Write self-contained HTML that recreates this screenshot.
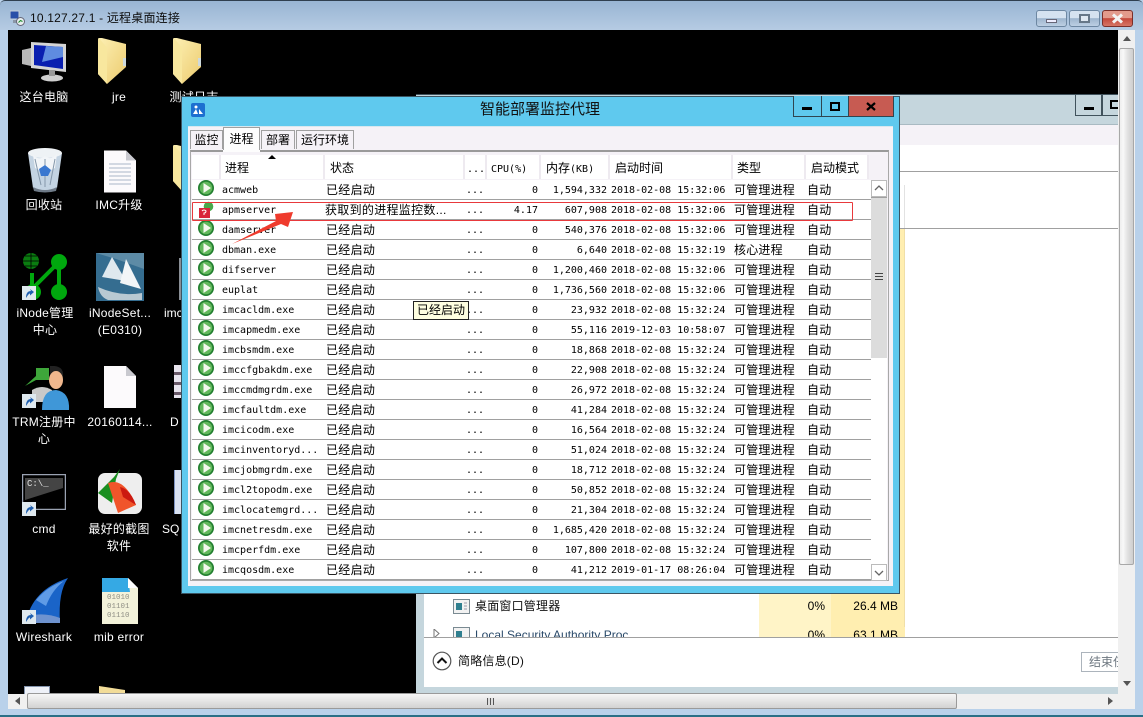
<!DOCTYPE html>
<html><head><meta charset="utf-8"><style>
html,body{margin:0;padding:0;width:1143px;height:717px;overflow:hidden;background:#b9d1ea}
*{box-sizing:border-box}
body{position:relative;font-family:"Liberation Sans","Noto Sans CJK SC",sans-serif;font-size:12px;color:#000}
.a{position:absolute}
.l{position:absolute;color:#fff;font-size:12px;line-height:17px;text-align:center;white-space:nowrap;letter-spacing:.25px;transform:translate(-50%,1px)}
svg{position:absolute;overflow:hidden}
.r{position:absolute;left:192px;width:679px;height:20px;border-bottom:1px solid #a0a0a0;background:#fff}
.r span{position:absolute;top:0;line-height:21px;white-space:nowrap}
.r span.n,.r span.d,.r span.c,.r span.m,.r span.t{font:10px/22px "DejaVu Sans Mono","Liberation Mono",monospace}
.n{left:30px}
.s{left:134px;letter-spacing:.3px}
.d{left:274px}
.c{right:333px}
.m{right:264px}
.t{left:419px}
.y{left:542px;letter-spacing:.2px}
.o{left:615px;letter-spacing:.2px}
.r svg{left:5px;top:-1px}
.h{position:absolute;top:155px;height:24px;background:#fff;border-right:2px solid #eeeaf0;line-height:26px;padding-left:4px;font-size:12px;white-space:nowrap}
.h i{font:10px "DejaVu Sans Mono","Liberation Mono",monospace}
.tab{position:absolute;top:130px;height:19px;background:#f5f2f7;border:1px solid #a0a0a0;border-bottom:none;line-height:19px;text-align:center;font-size:12px}
</style></head><body>
<svg width="0" height="0"><defs>
<linearGradient id="fg" x1="0" y1="0" x2="1" y2="1"><stop offset="0" stop-color="#fdf0b4"/><stop offset="1" stop-color="#eccb6e"/></linearGradient>
<symbol id="p" viewBox="0 0 18 18"><circle cx="9" cy="9" r="8" fill="#237f30"/><circle cx="9" cy="9" r="6.300" fill="#62b85c"/><path d="M6.500 4L14 9L6.500 14Z" fill="#f4f8ee"/></symbol>
<symbol id="f" viewBox="0 0 32 46"><path d="M1 0Q0 0 0 2V36L9 46L28 29V6L4 0Z" fill="url(#fg)"/><path d="M1 0L9 10V46L0 36V2Z" fill="#f8e79e"/><path d="M25 20h3v8h-3z" fill="#cdd9dd"/></symbol>
<symbol id="k" viewBox="0 0 14 14"><rect width="14" height="14" fill="#dfe9ef"/><path d="M4 12C4 7 6 5 9 5L8 3L12 6L8 9.500V7.500C7 7.500 6 9 4 12Z" fill="#1f5fb0"/></symbol>
<symbol id="d" viewBox="0 0 32 42"><path d="M0 0H22L32 10V42H0Z" fill="#fcfafc"/><path d="M22 0L32 10H22Z" fill="#c9c9cf"/></symbol>
</defs></svg>

<!-- outer title -->
<div class="a" style="left:0;top:0;width:1143px;height:30px;background:linear-gradient(#98b5d3,#b5cbe3);border-top:1px solid #2f3f4f;border-radius:5px 5px 0 0"></div>
<svg style="left:10px;top:10px" width="15" height="16" viewBox="0 0 15 16"><rect x="0" y="1" width="9" height="8" fill="#2a4fa8" stroke="#c8d0da"/><rect x="3" y="10" width="5" height="3" fill="#8a96a6"/><circle cx="10.500" cy="11.500" r="4" fill="#e8eef0" stroke="#667"/><path d="M8.500 12.500l2-2 2 1" stroke="#1a8a2a" fill="none"/></svg>
<div class="a" style="left:30px;top:9px;font-size:12px;line-height:18px;letter-spacing:.2px;color:#0d0d0d;white-space:nowrap">10.127.27.1 - 远程桌面连接</div>
<div class="a" style="left:1036px;top:10px;width:31px;height:17px;border:1px solid #6d87a2;border-radius:3px;background:linear-gradient(#d5e2f0 45%,#9db5ce 50%,#bccfe3)"></div>
<div class="a" style="left:1046px;top:19px;width:11px;height:4px;background:#eef;border:1px solid #667"></div>
<div class="a" style="left:1069px;top:10px;width:31px;height:17px;border:1px solid #6d87a2;border-radius:3px;background:linear-gradient(#d5e2f0 45%,#9db5ce 50%,#bccfe3)"></div>
<div class="a" style="left:1079px;top:14px;width:11px;height:9px;background:#dfe8f2;border:2px solid #667788"></div>
<div class="a" style="left:1102px;top:10px;width:31px;height:17px;border:1px solid #7a2f2a;border-radius:3px;background:linear-gradient(#e39a8c 45%,#c4483b 50%,#d67565)"></div>
<svg style="left:1111px;top:13px" width="13" height="11" viewBox="0 0 13 11"><path d="M2 1.500L11 9.500M11 1.500L2 9.500" stroke="#f3f3f3" stroke-width="3"/></svg>

<!-- black desktop -->
<div class="a" style="left:8px;top:30px;width:1110px;height:664px;background:#000;overflow:hidden"></div>

<!-- desktop icons -->
<svg style="left:22px;top:40px" width="46" height="44" viewBox="0 0 46 44"><path d="M0 10L9 8V26L0 24Z" fill="#b9b9b9"/><path d="M9 2L44 4V32L9 28Z" fill="#d5d5d5"/><path d="M12 5L41 7V29L12 25Z" fill="#0a1fb0"/><path d="M24 6L41 7V17L20 22Z" fill="#5f8ce0"/><ellipse cx="30" cy="38" rx="11" ry="3.500" fill="#cfcfcf"/><rect x="27" y="30" width="6" height="6" fill="#999"/></svg>
<div class="l" style="left:44px;top:88px">这台电脑</div>
<svg style="left:98px;top:38px" width="32" height="46"><use href="#f"/></svg>
<div class="l" style="left:119px;top:88px">jre</div>
<svg style="left:173px;top:38px" width="32" height="46"><use href="#f"/></svg>
<div class="l" style="left:194px;top:88px">测试日志</div>

<svg style="left:27px;top:147px" width="36" height="46" viewBox="0 0 36 46"><path d="M1 6L6 41Q18 46 30 41L35 6Z" fill="#c3d3e2"/><ellipse cx="18" cy="6" rx="17" ry="5" fill="#eef2f5"/><path d="M6 8q6 6 12 1q6 5 12-2l-2 14q-10 6-20 0z" fill="#f2f5f8"/><path d="M8 12L14 38M18 12V40M28 12L23 38" stroke="#8497aa"/><path d="M12 22l6-4 6 5-3 6h-7z" fill="#3a78d0"/><path d="M6 40Q18 46 30 40L29 44Q18 47 7 44Z" fill="#6f7b88"/></svg>
<div class="l" style="left:44px;top:196px">回收站</div>
<svg style="left:104px;top:150px" width="32" height="43"><use href="#d"/><path d="M5 14H27M5 18H27M5 22H27M5 26H27M5 30H27M5 34H27" stroke="#aab6c8"/></svg>
<div class="l" style="left:119px;top:196px">IMC升级</div>
<svg style="left:173px;top:145px" width="32" height="46"><use href="#f"/></svg>

<svg style="left:22px;top:253px" width="48" height="48" viewBox="0 0 48 48"><circle cx="9" cy="8" r="8" fill="#0a7d10"/><path d="M1 8H17M9 0V16M3 3H15M3 13H15" stroke="#000" stroke-width=".8"/><path d="M10 36L37 9M37 9V39M10 20V38" stroke="#00a80e" stroke-width="4" fill="none"/><circle cx="37" cy="9" r="8" fill="#00a80e"/><circle cx="37" cy="39" r="8" fill="#00a80e"/><circle cx="11" cy="39" r="8" fill="#00a80e"/></svg>
<svg style="left:22px;top:286px" width="14" height="14"><use href="#k"/></svg>
<div class="l" style="left:45px;top:304px">iNode管理<br>中心</div>
<svg style="left:96px;top:253px" width="48" height="48" viewBox="0 0 48 48"><rect width="48" height="48" fill="#356d90"/><path d="M0 0H48V16L20 6Z" fill="#5d8ba6"/><path d="M16 4L30 28L6 24Z" fill="#dfe8ee"/><path d="M30 6L45 36L24 30Z" fill="#f2f5f7"/><path d="M2 34Q24 44 46 40V47H12Q4 44 2 34Z" fill="#b9c9d2"/></svg>
<div class="l" style="left:120px;top:304px">iNodeSet...<br>(E0310)</div>
<div class="a" style="left:179px;top:258px;width:2px;height:42px;background:#8a8f96"></div>
<div class="a" style="left:164px;top:305px;width:17px;height:17px;overflow:hidden;color:#fff;line-height:17px">imc</div>

<svg style="left:22px;top:366px" width="48" height="44" viewBox="0 0 48 44"><path d="M3 20L14 10V2L27 2V14H14Z" fill="#3ea63a"/><path d="M10 24Q20 18 30 24V36H10Z" fill="#c9c9c9"/><path d="M28 0Q42 -1 41 10V14H28Z" fill="#222"/><ellipse cx="34" cy="14" rx="7" ry="9" fill="#f0b78d"/><path d="M20 44Q20 24 34 24Q48 26 47 44Z" fill="#3f97d8"/></svg>
<svg style="left:22px;top:394px" width="14" height="14"><use href="#k"/></svg>
<div class="l" style="left:44px;top:413px">TRM注册中<br>心</div>
<svg style="left:104px;top:366px" width="32" height="42"><use href="#d"/></svg>
<div class="l" style="left:120px;top:413px">20160114...</div>
<div class="a" style="left:174px;top:365px;width:7px;height:33px;background:repeating-linear-gradient(#e8e4ee 0 7px,#6a5a6a 7px 10px)"></div>
<div class="a" style="left:170px;top:414px;width:11px;height:17px;overflow:hidden;color:#fff;line-height:17px">D</div>

<svg style="left:22px;top:474px" width="44" height="36" viewBox="0 0 44 36"><rect x=".5" y=".5" width="43" height="35" fill="#000" stroke="#9aa2b2" stroke-width="1.500"/><path d="M3 4H41V14L3 26Z" fill="#444"/></svg>
<div class="a" style="left:27px;top:478px;font:9px/12px 'Liberation Mono',monospace;color:#e0e0e0">C:\_</div>
<svg style="left:22px;top:502px" width="14" height="14"><use href="#k"/></svg>
<div class="l" style="left:44px;top:520px">cmd</div>
<svg style="left:98px;top:469px" width="46" height="46" viewBox="0 0 46 46"><rect y="4" width="44" height="41" rx="7" fill="#eee"/><path d="M0 24L16 8L22 0L18 10L14 34Z" fill="#1a8f20"/><path d="M10 14Q26 8 38 36L20 44Z" fill="#f0552a"/><path d="M22 18Q32 20 38 36L25 28Z" fill="#cc1a10"/></svg>
<div class="l" style="left:119px;top:520px">最好的截图<br>软件</div>
<div class="a" style="left:174px;top:470px;width:7px;height:44px;background:#d9e2f2;border-left:1px solid #7d93c2"></div>
<div class="a" style="left:162px;top:521px;width:19px;height:17px;overflow:hidden;color:#fff;line-height:17px">SQ</div>

<svg style="left:24px;top:578px" width="46" height="46" viewBox="0 0 46 46"><path d="M2 44Q8 12 44 0Q34 14 36 44Z" fill="#1a64c8"/><path d="M12 22Q24 8 40 3Q28 12 22 28Z" fill="#5f9be6"/><path d="M4 38Q20 34 36 40V45H2Z" fill="#6f93cf"/></svg>
<svg style="left:22px;top:610px" width="14" height="14"><use href="#k"/></svg>
<div class="l" style="left:44px;top:628px">Wireshark</div>
<svg style="left:102px;top:578px" width="36" height="46" viewBox="0 0 36 46"><path d="M0 0H26L36 10V46H0Z" fill="#f3f2da"/><path d="M0 0H26L28 14H0Z" fill="#35a9e4"/><path d="M26 0L36 10H26Z" fill="#fff"/></svg>
<div class="a" style="left:107px;top:594px;width:28px;font:7.500px/9px 'Liberation Mono',monospace;color:#8f8f85">01010<br>01101<br>01110</div>
<div class="l" style="left:119px;top:628px">mib error</div>
<div class="a" style="left:24px;top:686px;width:26px;height:8px;background:#eef1f8;border:1px solid #8494ad;border-bottom:none"></div>
<div class="a" style="left:99px;top:686px;width:26px;height:8px;background:#f2dc98;clip-path:polygon(0 0,100% 50%,100% 100%,0 100%)"></div>

<!-- behind window -->
<div class="a" style="left:416px;top:94px;width:702px;height:600px;background:#c5d6dd;border-top:1px solid #40525c;overflow:hidden">
 <div class="a" style="left:8px;top:29px;width:694px;height:563px;background:#fff;border-top:1px solid #a9bac2"></div>
 <div class="a" style="left:8px;top:30px;width:694px;height:20px;background:#f5f2f7"></div>
 <div class="a" style="left:8px;top:76px;width:694px;height:1px;background:#a0a0a0"></div>
 <div class="a" style="left:343px;top:133px;width:72px;height:410px;background:#fff4c7"></div>
 <div class="a" style="left:415px;top:133px;width:74px;height:410px;background:#ffeeb0;border-right:1px solid #f0dfa8"></div>
 <div class="a" style="left:8px;top:133px;width:694px;height:1px;background:#a0a0a0"></div>
 <div class="a" style="left:488px;top:90px;width:1px;height:43px;background:#e2e2e2"></div>
 <div class="a" style="left:659px;top:0;width:27px;height:21px;border:1px solid #40525c;border-top:none"></div>
 <div class="a" style="left:668px;top:12px;width:10px;height:3px;background:#000"></div>
 <div class="a" style="left:686px;top:0;width:16px;height:21px;border-left:1px solid #40525c;border-bottom:1px solid #40525c"></div>
 <div class="a" style="left:694px;top:5px;width:10px;height:9px;border:2px solid #000"></div>
 <svg style="left:37px;top:504px" width="17" height="15" viewBox="0 0 17 15"><rect x=".5" y=".5" width="16" height="14" fill="#f2f2f2" stroke="#7a8a92"/><rect x="3" y="4" width="6" height="7" fill="#2f7f8f"/><path d="M11 4h3M11 7h3M11 10h3" stroke="#99a"/></svg>
 <div class="a" style="left:59px;top:503px;line-height:17px;white-space:nowrap;color:#111;letter-spacing:.2px">桌面窗口管理器</div>
 <div class="a" style="left:343px;top:503px;width:66px;text-align:right;line-height:17px">0%</div>
 <div class="a" style="left:415px;top:503px;width:67px;text-align:right;line-height:17px">26.4 MB</div>
 <div class="a" style="left:8px;top:532px;width:694px;height:11px;overflow:hidden">
  <svg style="left:9px;top:2px" width="8" height="10" viewBox="0 0 8 10"><path d="M1 0L6 4.500L1 9Z" fill="#fff" stroke="#777"/></svg>
  <svg style="left:29px;top:0" width="17" height="15" viewBox="0 0 17 15"><rect x=".5" y=".5" width="16" height="14" fill="#f2f2f2" stroke="#7a8a92"/><rect x="3" y="4" width="6" height="7" fill="#2f7f8f"/></svg>
  <div class="a" style="left:51px;top:0;line-height:17px;white-space:nowrap;color:#2a4a6a">Local Security Authority Proc</div>
  <div class="a" style="left:335px;top:0;width:72px;height:11px;background:#fff4c7;text-align:right;padding-right:6px;line-height:17px">0%</div>
  <div class="a" style="left:407px;top:0;width:74px;height:11px;background:#ffeeb0;text-align:right;padding-right:7px;line-height:17px">63.1 MB</div>
 </div>
 <div class="a" style="left:8px;top:542px;width:694px;height:1px;background:#a0a0a0"></div>
 <svg style="left:16px;top:556px" width="20" height="20" viewBox="0 0 20 20"><circle cx="10" cy="10" r="8.800" fill="#fff" stroke="#555" stroke-width="1.200"/><path d="M5.500 12L10 7.500L14.500 12" fill="none" stroke="#111" stroke-width="2"/></svg>
 <div class="a" style="left:42px;top:557px;line-height:18px;white-space:nowrap;color:#111;letter-spacing:.2px">简略信息(D)</div>
 <div class="a" style="left:665px;top:557px;width:40px;height:20px;border:1px solid #acb4bc;line-height:18px;padding-left:7px;color:#6d7780;white-space:nowrap;overflow:hidden">结束任务</div>
</div>

<!-- right scrollbar -->
<div class="a" style="left:1118px;top:30px;width:17px;height:664px;background:#f0f0f0"></div>
<div class="a" style="left:1119px;top:48px;width:15px;height:517px;background:linear-gradient(90deg,#eeeeee,#f8f8f8 25%,#e0e0e0 60%,#cfcfcf);border:1px solid #a8a8a8;border-radius:2px"></div>
<svg style="left:1122px;top:35px" width="10" height="8"><path d="M1 6L5 1L9 6Z" fill="#555"/></svg>
<svg style="left:1122px;top:680px" width="10" height="8"><path d="M1 1L5 6L9 1Z" fill="#555"/></svg>
<!-- bottom scrollbar -->
<div class="a" style="left:8px;top:694px;width:1127px;height:15px;background:#f0f0f0"></div>
<div class="a" style="left:27px;top:693px;width:930px;height:16px;background:linear-gradient(#f6f6f6,#e6e6e6 45%,#d2d2d2);border:1px solid #9a9a9a;border-radius:2px"></div>
<div class="a" style="left:487px;top:698px;width:7px;height:7px;background:repeating-linear-gradient(90deg,#555 0 1px,#ddd 1px 3px)"></div>
<svg style="left:14px;top:696px" width="8" height="10"><path d="M6 1L1 5L6 9Z" fill="#555"/></svg>
<svg style="left:1106px;top:696px" width="8" height="10"><path d="M2 1L7 5L2 9Z" fill="#555"/></svg>
<div class="a" style="left:0;top:709px;width:1143px;height:8px;background:#b9d1ea;border-bottom:2px solid #2a6f86"></div>

<!-- dialog -->
<div class="a" style="left:181px;top:96px;width:719px;height:498px;background:#5fc9ee;border:1px solid #3b5563"></div>
<svg style="left:191px;top:103px" width="14" height="14" viewBox="0 0 14 14"><rect width="14" height="14" rx="2" fill="#1d6fd0"/><circle cx="5" cy="4" r="1.500" fill="#fff"/><path d="M2 11L5 6L7 11ZM8 11V6L12 11Z" fill="#fff"/></svg>
<div class="a" style="left:180px;top:100px;width:720px;text-align:center;font-size:15px;line-height:20px;color:#111">智能部署监控代理</div>
<div class="a" style="left:793px;top:96px;width:101px;height:21px;border:1px solid #2f4550;border-top:none;background:#5fc9ee"></div>
<div class="a" style="left:821px;top:96px;width:1px;height:21px;background:#2f4550"></div>
<div class="a" style="left:848px;top:96px;width:46px;height:21px;background:#c75b52;border:1px solid #2f4550;border-top:none"></div>
<div class="a" style="left:802px;top:107px;width:10px;height:3px;background:#000"></div>
<div class="a" style="left:830px;top:102px;width:10px;height:9px;border:2px solid #000"></div>
<svg style="left:866px;top:102px" width="10" height="9" viewBox="0 0 10 9"><path d="M1 1L9 8M9 1L1 8" stroke="#000" stroke-width="2.200"/></svg>

<div class="a" style="left:188px;top:126px;width:705px;height:460px;background:#f5f2f7;border-top:1px solid #d8e8ef"></div>
<div class="tab" style="left:190px;width:33px">监控</div>
<div class="tab" style="left:261px;width:34px">部署</div>
<div class="tab" style="left:296px;width:58px">运行环境</div>
<div class="a" style="left:223px;top:127px;width:37px;height:24px;background:#fdfdfd;border:1px solid #a0a0a0;border-bottom:none;text-align:center;line-height:22px;font-size:12px">进程</div>
<div class="a" style="left:190px;top:150px;width:699px;height:431px;border:1px solid #a8a8a8;border-top:2px solid #9a9a9a;background:#f5f2f7"></div>
<div class="a" style="left:223px;top:150px;width:37px;height:2px;background:#fdfdfd"></div>

<div class="h" style="left:192px;width:29px"></div>
<div class="h" style="left:221px;width:104px">进程</div>
<div class="a" style="left:268px;top:155px;width:0;height:0;border:4px solid transparent;border-top:none;border-bottom:4px solid #000"></div>
<div class="h" style="left:325px;width:140px;padding-left:5px">状态</div>
<div class="h" style="left:465px;width:22px;padding-left:2px"><i>...</i></div>
<div class="h" style="left:487px;width:54px"><i>CPU(%)</i></div>
<div class="h" style="left:541px;width:69px;padding-left:5px">内存<i>(KB)</i></div>
<div class="h" style="left:610px;width:123px;padding-left:5px">启动时间</div>
<div class="h" style="left:733px;width:73px;padding-left:4px">类型</div>
<div class="h" style="left:806px;width:63px;padding-left:5px">启动模式</div>

<div class="r" style="top:180px"><svg width="18" height="18"><use href="#p"/></svg><span class="n">acmweb</span><span class="s">已经启动</span><span class="d">...</span><span class="c">0</span><span class="m">1,594,332</span><span class="t">2018-02-08 15:32:06</span><span class="y">可管理进程</span><span class="o">自动</span></div>
<div class="r" style="top:200px"><svg style="top:1px" width="18" height="18" viewBox="0 0 18 18"><circle cx="11.500" cy="5.500" r="4.800" fill="#4aa84a"/><rect x="2" y="7" width="11" height="10" fill="#d9253a"/><path d="M5 10q2-2 4 0q0 2-2 2v2" stroke="#fff" fill="none"/></svg><span class="n">apmserver</span><span class="s" style="left:133px">获取到的进程监控数...</span><span class="d">...</span><span class="c">4.17</span><span class="m">607,908</span><span class="t">2018-02-08 15:32:06</span><span class="y">可管理进程</span><span class="o">自动</span></div>
<div class="r" style="top:220px"><svg width="18" height="18"><use href="#p"/></svg><span class="n">damserver</span><span class="s">已经启动</span><span class="d">...</span><span class="c">0</span><span class="m">540,376</span><span class="t">2018-02-08 15:32:06</span><span class="y">可管理进程</span><span class="o">自动</span></div>
<div class="r" style="top:240px"><svg width="18" height="18"><use href="#p"/></svg><span class="n">dbman.exe</span><span class="s">已经启动</span><span class="d">...</span><span class="c">0</span><span class="m">6,640</span><span class="t">2018-02-08 15:32:19</span><span class="y">核心进程</span><span class="o">自动</span></div>
<div class="r" style="top:260px"><svg width="18" height="18"><use href="#p"/></svg><span class="n">difserver</span><span class="s">已经启动</span><span class="d">...</span><span class="c">0</span><span class="m">1,200,460</span><span class="t">2018-02-08 15:32:06</span><span class="y">可管理进程</span><span class="o">自动</span></div>
<div class="r" style="top:280px"><svg width="18" height="18"><use href="#p"/></svg><span class="n">euplat</span><span class="s">已经启动</span><span class="d">...</span><span class="c">0</span><span class="m">1,736,560</span><span class="t">2018-02-08 15:32:06</span><span class="y">可管理进程</span><span class="o">自动</span></div>
<div class="r" style="top:300px"><svg width="18" height="18"><use href="#p"/></svg><span class="n">imcacldm.exe</span><span class="s">已经启动</span><span class="d">...</span><span class="c">0</span><span class="m">23,932</span><span class="t">2018-02-08 15:32:24</span><span class="y">可管理进程</span><span class="o">自动</span></div>
<div class="r" style="top:320px"><svg width="18" height="18"><use href="#p"/></svg><span class="n">imcapmedm.exe</span><span class="s">已经启动</span><span class="d">...</span><span class="c">0</span><span class="m">55,116</span><span class="t">2019-12-03 10:58:07</span><span class="y">可管理进程</span><span class="o">自动</span></div>
<div class="r" style="top:340px"><svg width="18" height="18"><use href="#p"/></svg><span class="n">imcbsmdm.exe</span><span class="s">已经启动</span><span class="d">...</span><span class="c">0</span><span class="m">18,868</span><span class="t">2018-02-08 15:32:24</span><span class="y">可管理进程</span><span class="o">自动</span></div>
<div class="r" style="top:360px"><svg width="18" height="18"><use href="#p"/></svg><span class="n">imccfgbakdm.exe</span><span class="s">已经启动</span><span class="d">...</span><span class="c">0</span><span class="m">22,908</span><span class="t">2018-02-08 15:32:24</span><span class="y">可管理进程</span><span class="o">自动</span></div>
<div class="r" style="top:380px"><svg width="18" height="18"><use href="#p"/></svg><span class="n">imccmdmgrdm.exe</span><span class="s">已经启动</span><span class="d">...</span><span class="c">0</span><span class="m">26,972</span><span class="t">2018-02-08 15:32:24</span><span class="y">可管理进程</span><span class="o">自动</span></div>
<div class="r" style="top:400px"><svg width="18" height="18"><use href="#p"/></svg><span class="n">imcfaultdm.exe</span><span class="s">已经启动</span><span class="d">...</span><span class="c">0</span><span class="m">41,284</span><span class="t">2018-02-08 15:32:24</span><span class="y">可管理进程</span><span class="o">自动</span></div>
<div class="r" style="top:420px"><svg width="18" height="18"><use href="#p"/></svg><span class="n">imcicodm.exe</span><span class="s">已经启动</span><span class="d">...</span><span class="c">0</span><span class="m">16,564</span><span class="t">2018-02-08 15:32:24</span><span class="y">可管理进程</span><span class="o">自动</span></div>
<div class="r" style="top:440px"><svg width="18" height="18"><use href="#p"/></svg><span class="n">imcinventoryd...</span><span class="s">已经启动</span><span class="d">...</span><span class="c">0</span><span class="m">51,024</span><span class="t">2018-02-08 15:32:24</span><span class="y">可管理进程</span><span class="o">自动</span></div>
<div class="r" style="top:460px"><svg width="18" height="18"><use href="#p"/></svg><span class="n">imcjobmgrdm.exe</span><span class="s">已经启动</span><span class="d">...</span><span class="c">0</span><span class="m">18,712</span><span class="t">2018-02-08 15:32:24</span><span class="y">可管理进程</span><span class="o">自动</span></div>
<div class="r" style="top:480px"><svg width="18" height="18"><use href="#p"/></svg><span class="n">imcl2topodm.exe</span><span class="s">已经启动</span><span class="d">...</span><span class="c">0</span><span class="m">50,852</span><span class="t">2018-02-08 15:32:24</span><span class="y">可管理进程</span><span class="o">自动</span></div>
<div class="r" style="top:500px"><svg width="18" height="18"><use href="#p"/></svg><span class="n">imclocatemgrd...</span><span class="s">已经启动</span><span class="d">...</span><span class="c">0</span><span class="m">21,304</span><span class="t">2018-02-08 15:32:24</span><span class="y">可管理进程</span><span class="o">自动</span></div>
<div class="r" style="top:520px"><svg width="18" height="18"><use href="#p"/></svg><span class="n">imcnetresdm.exe</span><span class="s">已经启动</span><span class="d">...</span><span class="c">0</span><span class="m">1,685,420</span><span class="t">2018-02-08 15:32:24</span><span class="y">可管理进程</span><span class="o">自动</span></div>
<div class="r" style="top:540px"><svg width="18" height="18"><use href="#p"/></svg><span class="n">imcperfdm.exe</span><span class="s">已经启动</span><span class="d">...</span><span class="c">0</span><span class="m">107,800</span><span class="t">2018-02-08 15:32:24</span><span class="y">可管理进程</span><span class="o">自动</span></div>
<div class="r" style="top:560px"><svg width="18" height="18"><use href="#p"/></svg><span class="n">imcqosdm.exe</span><span class="s">已经启动</span><span class="d">...</span><span class="c">0</span><span class="m">41,212</span><span class="t">2019-01-17 08:26:04</span><span class="y">可管理进程</span><span class="o">自动</span></div>

<!-- dialog scrollbar -->
<div class="a" style="left:871px;top:180px;width:16px;height:400px;background:#fff"></div>
<div class="a" style="left:871px;top:197px;width:16px;height:161px;background:#dcdcdc;border-top:1px solid #a0a0a0"></div>
<div class="a" style="left:871px;top:180px;width:16px;height:17px;background:#fff;border:1px solid #bbb"></div>
<div class="a" style="left:871px;top:564px;width:16px;height:17px;background:#fff;border:1px solid #bbb"></div>
<svg style="left:874px;top:184px" width="10" height="8"><path d="M1 6L5 2L9 6" fill="none" stroke="#666" stroke-width="1.300"/></svg>
<svg style="left:874px;top:569px" width="10" height="8"><path d="M1 2L5 6L9 2" fill="none" stroke="#666" stroke-width="1.300"/></svg>
<div class="a" style="left:875px;top:273px;width:8px;height:8px;background:repeating-linear-gradient(#444 0 1px,#dcdcdc 1px 3px)"></div>

<!-- tooltip -->
<div class="a" style="left:413px;top:301px;width:56px;height:19px;background:#ffffe1;border:1px solid #222;line-height:17px;text-align:center;font-size:12px">已经启动</div>
<!-- highlight -->
<div class="a" style="left:192px;top:202px;width:661px;height:19px;border:1px solid #e8393c;border-radius:1px"></div>
<svg style="left:228px;top:208px" width="70" height="40" viewBox="0 0 70 40"><path d="M4 36L48 13L47 6L65 4L60 19L53 16Z" fill="#ef3b2d"/></svg>
</body></html>
